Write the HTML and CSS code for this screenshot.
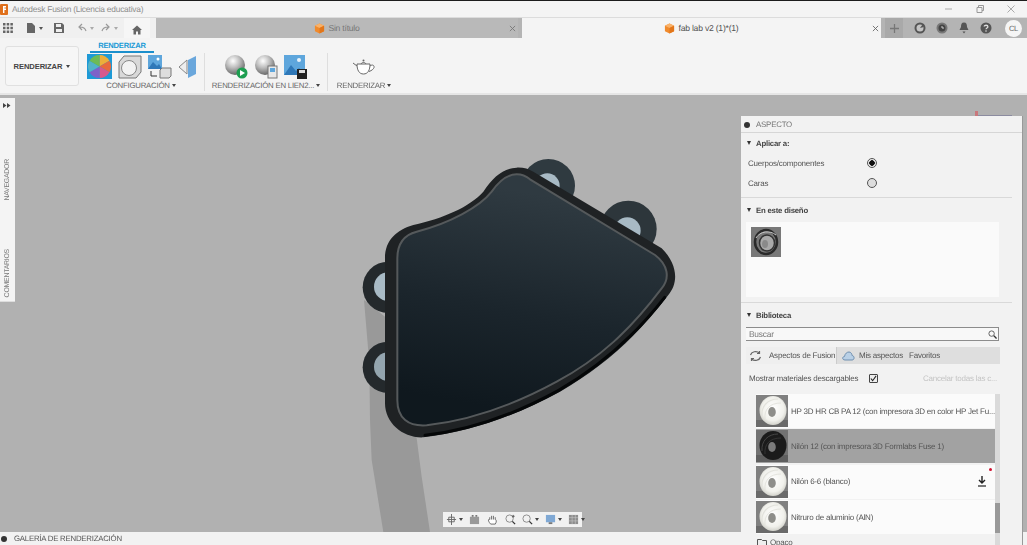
FILE: index.html
```html
<!DOCTYPE html>
<html lang="es">
<head>
<meta charset="utf-8">
<title>Autodesk Fusion</title>
<link rel="stylesheet" href="styles.css">
</head>
<body>
<svg class="defs" width="0" height="0" aria-hidden="true">
  <defs>
    <symbol id="cube" viewBox="0 0 12 12">
      <path d="M6 .5 11 3v6l-5 2.500L1 9V3z" fill="#f08a2c"/>
      <path d="M6 .5 11 3 6 5.500 1 3z" fill="#f9b26a"/>
      <path d="M6 5.500 11 3v6l-5 2.500z" fill="#e2761a"/>
    </symbol>
    <radialGradient id="tw" cx=".5" cy=".45" r=".62">
      <stop offset="0" stop-color="#fff"/><stop offset=".65" stop-color="#f1f1ec"/><stop offset="1" stop-color="#c4c4bc"/>
    </radialGradient>
    <symbol id="torus" viewBox="0 0 32 32">
      <rect width="32" height="32" fill="#808080"/>
      <rect y="25" width="32" height="7" fill="#6a6a6a"/>
      <ellipse cx="17" cy="15.500" rx="13.500" ry="14.500" fill="url(#tw)"/>
      <path d="M6 21C5 11 12 4 22 4" fill="none" stroke="#e2e2dc" stroke-width="1.200"/>
      <path d="M9 24C8 14 14 8 25 8" fill="none" stroke="#e4e4de" stroke-width="1"/>
      <ellipse cx="16" cy="17" rx="3.800" ry="5" fill="#8e8e8a"/>
    </symbol>
    <symbol id="torusdark" viewBox="0 0 32 32">
      <rect width="32" height="32" fill="#727272"/>
      <rect y="25" width="32" height="7" fill="#5f5f5f"/>
      <ellipse cx="17" cy="15.500" rx="13.500" ry="14.500" fill="#1b1b1b"/>
      <path d="M6 21C5 11 12 4 22 4" fill="none" stroke="#444" stroke-width="1"/>
      <path d="M9 24C8 14 14 8 25 8" fill="none" stroke="#3a3a3a" stroke-width=".8"/>
      <ellipse cx="16" cy="17" rx="3.800" ry="5" fill="#7b7b7b"/>
    </symbol>
    <symbol id="torusring" viewBox="0 0 30 30">
      <rect width="30" height="30" fill="#787878"/>
      <ellipse cx="15" cy="15" rx="11" ry="12" fill="none" stroke="#2a2a2a" stroke-width="2.500"/>
      <ellipse cx="16" cy="16" rx="7.500" ry="8" fill="#a9a9a9" stroke="#333" stroke-width="1.500"/>
      <path d="M5 11C9 4 19 3 25 8" fill="none" stroke="#c9c9c9" stroke-width="1"/>
      <ellipse cx="14" cy="17" rx="3" ry="4" fill="#8a8a8a"/>
    </symbol>
    <radialGradient id="ball" cx=".4" cy=".3" r=".75">
      <stop offset="0" stop-color="#fff"/><stop offset=".45" stop-color="#bdbdbd"/><stop offset="1" stop-color="#5d5d5d"/>
    </radialGradient>
    <linearGradient id="shapefill" x1=".62" y1=".1" x2=".45" y2=".95">
      <stop offset="0" stop-color="#2f3a41"/><stop offset=".55" stop-color="#1b252c"/><stop offset="1" stop-color="#0f181e"/>
    </linearGradient>
  </defs>
</svg>

<header class="titlebar">
  <svg class="applogo" viewBox="0 0 8 11"><rect width="8" height="11" rx="1" fill="#e0701c"/><path d="M3 2h3v1.400H4.400v1.200H6V6H4.400v3H3z" fill="#fff"/></svg>
  <span class="apptitle">Autodesk Fusion (Licencia educativa)</span>
  <div class="winctl">
    <svg viewBox="0 0 10 10"><path d="M1 5h7" stroke="#aaa" fill="none"/></svg>
    <svg viewBox="0 0 10 10"><path d="M2 3.500h5v5H2zM3.500 3.500V1.500h5v5H7" stroke="#999" fill="none"/></svg>
    <svg viewBox="0 0 10 10"><path d="M1.500 1.500l7 7M8.500 1.500l-7 7" stroke="#aaa" fill="none"/></svg>
  </div>
</header>

<nav class="tabrow">
  <div class="quick">
    <svg class="qi grid" viewBox="0 0 10 10"><path d="M0 0h2.500v2.500H0zM3.700 0h2.500v2.500H3.700zM7.400 0h2.500v2.500H7.400zM0 3.700h2.500v2.500H0zM3.700 3.700h2.500v2.500H3.700zM7.400 3.700h2.500v2.500H7.400zM0 7.400h2.500v2.500H0zM3.700 7.400h2.500v2.500H3.700zM7.400 7.400h2.500v2.500H7.400z" fill="#666"/></svg>
    <span class="qgroup doc"><svg class="qi" viewBox="0 0 10 10"><path d="M1 0h5l3 3v7H1z" fill="#666"/></svg><i class="caret"></i></span>
    <svg class="qi save" viewBox="0 0 10 10"><path d="M0 0h8l2 2v8H0z" fill="#666"/><path d="M2 1h5v3H2zM2 6h6v3H2z" fill="#eee"/></svg>
    <span class="qgroup undo"><svg class="qi" viewBox="0 0 10 10"><path d="M9 8C8 4.500 6 4 3 4M5 1 2 4l3 3" stroke="#999" stroke-width="1.200" fill="none"/></svg><i class="caret light"></i></span>
    <span class="qgroup redo"><svg class="qi" viewBox="0 0 10 10"><path d="M1 8c1-3.500 3-4 6-4M5 1l3 3-3 3" stroke="#999" stroke-width="1.200" fill="none"/></svg><i class="caret light"></i></span>
    <div class="hometab"><svg class="qi" viewBox="0 0 10 10"><path d="M5 .5 10 5H8.500v4.500H6V6.500H4v3H1.500V5H0z" fill="#666"/></svg></div>
  </div>
  <div class="tabs">
    <div class="tab">
      <svg class="cube"><use href="#cube"/></svg><span>Sin título</span>
      <svg class="tabx" viewBox="0 0 8 8"><path d="M1 1l6 6M7 1 1 7" stroke="#777" fill="none"/></svg>
    </div>
    <div class="tab on">
      <svg class="cube"><use href="#cube"/></svg><span>fab lab v2 (1)*(1)</span>
      <svg class="tabx" viewBox="0 0 8 8"><path d="M1 1l6 6M7 1 1 7" stroke="#666" fill="none"/></svg>
    </div>
    <div class="plus"><svg viewBox="0 0 10 10"><path d="M5 0v10M0 5h10" stroke="#777" stroke-width="1.400" fill="none"/></svg></div>
    <div class="tools">
      <svg viewBox="0 0 12 12"><circle cx="6" cy="6" r="5.500" fill="#555"/><circle cx="6" cy="6" r="3.500" fill="#c4c4c4"/><path d="M6 6 8.500 2.500 10 5z" fill="#555"/></svg>
      <svg viewBox="0 0 12 12"><circle cx="6" cy="6" r="5.500" fill="#777"/><circle cx="6" cy="6" r="3.500" fill="#444"/><path d="M6 4v2h2" stroke="#ccc" fill="none"/></svg>
      <svg viewBox="0 0 12 12"><path d="M6 .5c2.500 0 3 2 3 4.500l1.500 3h-9L3 5C3 2.500 3.500.5 6 .5zM4.500 9.500h3L6 11.500z" fill="#555"/></svg>
      <svg viewBox="0 0 12 12"><circle cx="6" cy="6" r="5.500" fill="#555"/><path d="M4.200 4.600C4.200 2.800 7.900 2.800 7.900 4.700 7.900 6 6 6 6 7.300" stroke="#ddd" stroke-width="1.300" fill="none"/><circle cx="6" cy="9" r=".8" fill="#ddd"/></svg>
      <span class="avatar">CL</span>
    </div>
  </div>
</nav>

<section class="ribbon">
  <button class="workspace">RENDERIZAR<i class="caret dark"></i></button>
  <div class="ribbonmain">
    <div class="ribtab"><span>RENDERIZAR</span></div>
    <div class="groups">
      <div class="group g1">
        <div class="icons">
          <span class="selected"><svg viewBox="0 0 22 22" width="23" height="23"><path d="M11 11 11 0A11 11 0 0 1 20.500 5.500z" fill="#ecae3a"/><path d="M11 11 20.500 5.500A11 11 0 0 1 20.500 16.500z" fill="#e8693c"/><path d="M11 11 20.500 16.500A11 11 0 0 1 11 22z" fill="#d65a8e"/><path d="M11 11 11 22A11 11 0 0 1 1.500 16.500z" fill="#7d62c8"/><path d="M11 11 1.500 16.500A11 11 0 0 1 1.500 5.500z" fill="#52b3c8"/><path d="M11 11 1.500 5.500A11 11 0 0 1 11 0z" fill="#6dbb55"/></svg></span>
          <svg viewBox="0 0 24 24" width="24" height="24"><path d="M1 7 6 1h17v16l-5 6H1z" fill="#d9d9d9" stroke="#777"/><circle cx="11" cy="13" r="7.500" fill="#f2f2f2" stroke="#888"/></svg>
          <svg viewBox="0 0 24 24" width="24" height="24"><rect width="14" height="14" fill="#5ea6dc"/><path d="M0 14 5 7l4 4 2-2 3 5z" fill="#2f78b8"/><circle cx="10" cy="4" r="1.500" fill="#fff"/><path d="M12 15l2-2h9v8l-2 2h-9z" fill="#ddd" stroke="#777"/><path d="M3 16v5h6" stroke="#333" fill="none"/></svg>
          <svg viewBox="0 0 20 24" width="20" height="24"><path d="M1 12 9 5v14z" fill="#eee" stroke="#888"/><path d="M10 5 18 1v18l-8 4z" fill="#6aa7dc"/></svg>
        </div>
        <div class="glabel">CONFIGURACIÓN<i class="caret dark"></i></div>
      </div>
      <div class="group g2">
        <div class="icons">
          <svg viewBox="0 0 24 24" width="24" height="24"><circle cx="11" cy="10" r="10" fill="url(#ball)"/><circle cx="18" cy="18" r="5.500" fill="#1d9e50"/><path d="M16 15l5 3-5 3z" fill="#fff"/></svg>
          <svg viewBox="0 0 24 24" width="24" height="24"><circle cx="11" cy="10" r="10" fill="url(#ball)"/><rect x="14" y="11" width="9" height="12" fill="#e8e8e8" stroke="#777"/><rect x="16" y="13" width="5" height="4" fill="#5ea6dc"/></svg>
          <svg viewBox="0 0 24 24" width="24" height="24"><rect width="21" height="20" fill="#5ea6dc"/><path d="M0 20 7 10l5 6 3-3 6 7z" fill="#2f78b8"/><circle cx="15" cy="5" r="2" fill="#e8f3fb"/><rect x="13" y="14" width="10" height="10" fill="#222"/><rect x="15" y="15" width="6" height="3" fill="#ddd"/></svg>
        </div>
        <div class="glabel">RENDERIZACIÓN EN LIEN2...<i class="caret dark"></i></div>
      </div>
      <div class="group g3">
        <div class="icons">
          <svg viewBox="0 0 24 18" width="24" height="18"><path d="M5 6h13c0 6-2 10-6.500 10S5 12 5 6zM18 8c2.500-2 4.500-.5 4 1.500-.5 1.500-2 3-5 4M5 8 1 5M9 6c1-2 4-2 5 0" fill="#fff" stroke="#666"/><circle cx="11.500" cy="2.500" r="1" fill="#666"/></svg>
        </div>
        <div class="glabel">RENDERIZAR<i class="caret dark"></i></div>
      </div>
    </div>
  </div>
</section>

<main class="viewport">
  <svg class="model" viewBox="0 0 1050 1146" aria-hidden="true">
    <path d="M72 450 88 640 90 810 95 930 130 1146H270L245 980 230 865 135 500z" fill="#999"/>
    <circle cx="625" cy="107" r="80" fill="#2f3a40"/><circle cx="622" cy="107" r="37" fill="#a8bac5"/>
    <circle cx="865" cy="237" r="85" fill="#2d363b"/><circle cx="862" cy="242" r="40" fill="#a8bac5"/>
    <circle cx="145" cy="412" r="77" fill="#24292c"/><circle cx="145" cy="410" r="43" fill="#a8bac5"/>
    <circle cx="145" cy="652" r="77" fill="#24292c"/><circle cx="145" cy="650" r="43" fill="#94a5af"/>
    <path d="M530 53C490 55 460 80 430 125 390 170 310 205 220 225 170 240 135 270 135 325V760C135 820 190 865 250 862 400 845 540 790 660 725 790 650 890 560 985 435 1015 400 1015 345 965 295L580 65C565 57 550 52 530 53z" fill="#1f2224"/>
    <path d="M530 73C500 73 478 92 455 125 420 170 330 220 230 245 190 255 172 280 172 325V750C172 805 205 830 260 826 400 810 540 755 650 695 780 625 870 540 965 415 990 385 985 345 945 315L570 88C558 78 545 73 530 73z" fill="url(#shapefill)" stroke="#55595b" stroke-width="6"/>
    <path d="M255 856C400 840 538 786 656 721 786 646 884 558 974 442" fill="none" stroke="#050708" stroke-width="9" stroke-linecap="round"/>
  </svg>

  <aside class="sidetabs">
    <svg class="expand" viewBox="0 0 8 5"><path d="M0 0l3.500 2.500L0 5zM4 0l3.500 2.500L4 5z" fill="#444"/></svg>
    <span class="vtext nav">NAVEGADOR</span>
    <span class="vtext com">COMENTARIOS</span>
  </aside>

  <div class="axis"><span class="axisx"></span><span class="axisline"></span></div>

  <aside class="panel">
    <div class="phead"><i class="minus"></i>ASPECTO</div>
    <div class="sec apply">
      <h3><i class="tri"></i>Aplicar a:</h3>
      <label class="radio"><span>Cuerpos/componentes</span><i class="rad on"></i></label>
      <label class="radio"><span>Caras</span><i class="rad"></i></label>
    </div>
    <div class="sec design">
      <h3><i class="tri"></i>En este diseño</h3>
      <div class="designbox"><svg class="dthumb"><use href="#torusring"/></svg></div>
    </div>
    <div class="sec lib">
      <h3><i class="tri"></i>Biblioteca</h3>
      <div class="search"><span>Buscar</span><svg viewBox="0 0 10 10"><circle cx="4" cy="4" r="3" fill="none" stroke="#555"/><path d="M6.500 6.500 9.500 9.500" stroke="#333" stroke-width="1.500"/></svg></div>
      <div class="libtabs">
        <div class="libtab on">
          <svg viewBox="0 0 12 12"><path d="M1 5C2 1.500 7 .5 10 3M10 1v2.500H7.500M11 7C10 10.500 5 11.500 2 9M2 11V8.500h2.500" fill="none" stroke="#666" stroke-width="1.200"/></svg>
          <span>Aspectos de Fusion</span>
        </div>
        <div class="libtab">
          <svg viewBox="0 0 13 9"><path d="M3 8.500C0 8.500 0 5 2.500 5 3 2 5 .5 7 .5 9 .5 10 2.500 10 4c2.500 0 3 4.500 0 4.500z" fill="#b9d0e6" stroke="#6f8fb0"/></svg>
          <span>Mis aspectos</span>
        </div>
        <div class="libtab"><span>Favoritos</span></div>
      </div>
      <div class="downloadable">
        <span>Mostrar materiales descargables</span>
        <i class="check"><svg viewBox="0 0 8 8"><path d="M1 4l2 2.500L7 1" fill="none" stroke="#222" stroke-width="1.200"/></svg></i>
        <span class="cancel">Cancelar todas las c...</span>
      </div>
      <div class="listwrap">
        <ul class="list">
          <li class="item"><svg class="thumb"><use href="#torus"/></svg><span>HP 3D HR CB PA 12 (con impresora 3D en color HP Jet Fu...</span></li>
          <li class="item sel"><svg class="thumb"><use href="#torusdark"/></svg><span>Nilón 12 (con impresora 3D Formlabs Fuse 1)</span></li>
          <li class="item"><svg class="thumb"><use href="#torus"/></svg><span>Nilón 6-6 (blanco)</span><i class="dot"></i><svg class="dl" viewBox="0 0 10 11"><path d="M5 0v6M2 4l3 3 3-3" fill="none" stroke="#222" stroke-width="1.400"/><path d="M1 10h8" stroke="#222" stroke-width="1.200"/></svg></li>
          <li class="item"><svg class="thumb"><use href="#torus"/></svg><span>Nitruro de aluminio (AlN)</span></li>
          <li class="folder"><svg viewBox="0 0 10 7"><path d="M.5.500h4l1 1h4v5h-9z" fill="#eee" stroke="#555"/></svg><span>Opaco</span></li>
        </ul>
        <div class="scroll"><div class="thumbbar"></div></div>
      </div>
    </div>
  </aside>

  <div class="navbar">
    <svg class="n1" viewBox="0 0 12 12"><path d="M6 0v12M1 6h10M3 3.500h6v5H3z" fill="none" stroke="#666"/></svg><i class="caret dark"></i>
    <svg class="n2" viewBox="0 0 12 12"><path d="M1 3h10v8H1z" fill="#999"/><path d="M3 1h2v2H3zM7 1h2v2H7z" fill="#777"/></svg>
    <svg class="n3" viewBox="0 0 12 12"><path d="M3 6V3.500M5 6V2M7 6V2M9 6V3.500M3 6C1 5 1 8 4 11H9C11 8 10 6 9 6" fill="#fff" stroke="#666"/></svg>
    <svg class="n4" viewBox="0 0 12 12"><circle cx="5" cy="5" r="4" fill="none" stroke="#888"/><path d="M8 8l3 3" stroke="#333" stroke-width="1.400"/><path d="M9 1v3M7.500 2.500h3" stroke="#555"/></svg>
    <span class="ngroup"><svg viewBox="0 0 12 12"><circle cx="5" cy="5" r="4" fill="none" stroke="#888"/><path d="M8 8l3 3" stroke="#333" stroke-width="1.400"/></svg><i class="caret dark"></i></span>
    <span class="ngroup"><svg viewBox="0 0 12 12"><rect x="1" y="1" width="10" height="8" fill="#7fa8d4"/><rect x="4" y="9" width="4" height="2" fill="#777"/></svg><i class="caret dark"></i></span>
    <span class="ngroup"><svg viewBox="0 0 12 12"><path d="M1 1h10v10H1z" fill="#8d8d8d"/><path d="M1 4h10M1 7.500h10M4.500 1v10M8 1v10" stroke="#ccc" stroke-width=".6"/></svg><i class="caret dark"></i></span>
  </div>
</main>

<footer class="gallery"><i class="minus"></i>GALERÍA DE RENDERIZACIÓN</footer>
</body>
</html>
```

FILE: styles.css
```css
* { box-sizing: border-box; }
html, body { margin: 0; height: 100%; }
body {
  width: 1027px; height: 545px; overflow: hidden;
  display: flex; flex-direction: column;
  font-family: "Liberation Sans", Arial, sans-serif;
  font-size: 8px; letter-spacing: -.22px; color: #555; background: #f2f2f2;
  text-rendering: geometricPrecision;
  filter: blur(.3px);
}
.defs { position: absolute; }
i { display: block; font-style: normal; }
ul { list-style: none; margin: 0; padding: 0; }

.caret { width: 0; height: 0; border: 2.5px solid transparent; border-top: 3px solid #555; border-bottom: 0; }
.caret.light { border-top-color: #aaa; }
.caret.dark { border-top-color: #444; }

.titlebar {
  height: 18px; flex: none; display: flex; align-items: center;
  background: #f4f4f4; border-top: 1px solid #1c1c1c; border-bottom: 1px solid #dcdcdc;
  padding-right: 11px;
}
.applogo { width: 8px; height: 11px; margin-right: 4px; }
.apptitle { color: #8e8e8e; font-size: 8.4px; }
.winctl { margin-left: auto; display: flex; gap: 21px; }
.winctl svg { width: 10px; height: 10px; }

.tabrow { height: 20px; flex: none; display: flex; background: #f0f0f0; }
.quick { width: 156px; flex: none; display: flex; align-items: center; padding-left: 3px; }
.qi { width: 10px; height: 10px; display: block; }
.qgroup { display: flex; align-items: center; gap: 3px; }
.doc { margin-left: 13px; }
.save { margin-left: 11px; }
.undo { margin-left: 13px; }
.redo { margin-left: 7px; }
.hometab {
  width: 26px; align-self: stretch; margin-left: 6px; background: #f6f6f6;
  display: flex; align-items: center; justify-content: center; padding-top: 3px;
}
.tabs { flex: 1; display: flex; background: #b4b4b4; }
.tab {
  position: relative; width: 362px; display: flex; align-items: center; justify-content: center; gap: 3px;
  background: #b9b9b9; color: #777; font-size: 8.6px; padding-left: 0;
}
.tab.on { width: 359px; margin-left: 4px; background: #f4f4f4; color: #555; }
.cube { width: 11px; height: 11px; }
.tabx { position: absolute; right: 2px; top: 7px; width: 7px; height: 7px; }
.plus { width: 18px; margin-left: 4px; background: #a9a9a9; display: flex; align-items: center; justify-content: center; }
.plus svg { width: 9px; height: 9px; }
.tools { flex: 1; display: flex; align-items: center; padding-left: 11px; gap: 10px; }
.tools svg { width: 12px; height: 12px; }
.avatar {
  width: 17px; height: 17px; margin-left: 3px; border-radius: 50%; background: #f5f5f5;
  color: #666; font-size: 7.5px; display: flex; align-items: center; justify-content: center;
}

.ribbon {
  height: 57px; flex: none; display: flex; align-items: flex-start;
  background: #f4f4f4; border-bottom: 2px solid #e6e6e6; padding: 7px 0 0 5px;
}
.workspace {
  width: 74px; height: 40px; flex: none; margin-top: 1px; padding: 0;
  display: flex; align-items: center; justify-content: center; gap: 4px;
  background: #f6f6f6; border: 1px solid #e0e0e0; border-radius: 3px;
  font: bold 7.6px "Liberation Sans", Arial, sans-serif; letter-spacing: -.1px; color: #444;
}
.ribbonmain { margin-left: 8px; margin-top: -3px; }
.ribtab { width: 64px; margin-left: 3px; height: 11px; border-bottom: 2px solid #1b8fcc; color: #1a9ad6; font-weight: bold; font-size: 7.6px; text-align: center; line-height: 8px; white-space: nowrap; }
.groups { display: flex; }
.group { display: flex; flex-direction: column; align-items: center; border-right: 1px solid #dedede; height: 38px; }
.group:last-child { border-right: 0; }
.g1 { width: 118px; padding-right: 9px; }
.g1 .icons { align-self: flex-start; }
.g2 { width: 123px; }
.g3 { width: 72px; }
.icons { height: 27px; display: flex; align-items: center; gap: 6px; }
.icons svg { display: block; flex: none; }
.selected { width: 25px; height: 25px; background: #1e9ad6; display: flex; align-items: center; justify-content: center; flex: none; }
.glabel { display: flex; align-items: center; gap: 2px; color: #666; font-size: 7.8px; white-space: nowrap; margin-top: 1px; }

.viewport { flex: 1; min-height: 0; position: relative; z-index: 1; background: #b1b1b1; }
.model { position: absolute; left: 340px; top: 55px; width: 350px; height: 382px; }

.sidetabs {
  position: absolute; left: 0; top: 3px; width: 15px; height: 204px;
  background: #f4f4f4; border-bottom: 1px solid #ddd;
}
.expand { position: absolute; left: 3px; top: 5px; width: 8px; height: 5px; }
.vtext { position: absolute; left: 3.5px; writing-mode: vertical-rl; transform: rotate(180deg); color: #777; font-size: 6.9px; white-space: nowrap; }
.nav { top: 61px; }
.com { top: 151px; }

.axis { position: absolute; left: 975px; top: 16px; width: 40px; height: 6px; }
.axisx { position: absolute; left: 0; top: 0; width: 3px; height: 5px; background: #c9787c; }
.axisline { position: absolute; left: 3px; top: 4px; width: 34px; height: 1px; background: #8c8ca0; }

.panel {
  position: absolute; left: 741px; top: 21px; width: 282px; height: 429px;
  background: #f2f2f2; overflow: hidden; border-right: 1px solid #999;
}
.phead {
  height: 17px; display: flex; align-items: center; gap: 6px; padding-left: 3px; padding-top: 1px;
  border-bottom: 1px solid #d6d6d6; color: #777; font-size: 7.9px;
}
.minus { width: 6px; height: 6px; border-radius: 50%; background: #333; }
.sec { padding-left: 5px; width: 271px; border-bottom: 1px solid #d9d9d9; }
.sec h3 { margin: 0; height: 13px; display: flex; align-items: center; gap: 5px; font-size: 7.8px; font-weight: bold; color: #444; padding-left: 1px; }
.tri { width: 0; height: 0; border: 2.5px solid transparent; border-top: 4px solid #333; border-bottom: 0; }
.apply { height: 65px; padding-top: 3.5px; }
.apply h3 { margin-bottom: 3.5px; }
.radio { display: flex; align-items: center; height: 20px; padding-left: 2px; color: #555; }
.radio span { width: 119px; }
.rad { width: 10px; height: 10px; border-radius: 50%; border: 1px solid #555; background: #ddd; }
.rad.on { background: radial-gradient(circle, #111 0 2.5px, #e8e8e8 3px); }
.design { height: 105px; padding-top: 5.5px; }
.designbox { width: 253px; height: 75px; margin-top: 5.5px; background: #fafafa; padding: 5px; }
.dthumb { display: block; width: 30px; height: 30px; }
.lib { border: 0; padding-top: 5.5px; }
.search {
  width: 253px; height: 14px; margin-top: 5.5px; padding: 0 1px 0 3px;
  display: flex; align-items: center; justify-content: space-between;
  background: #f8f8f8; border: 1px solid #8c8c8c; border-width: 1px 1px 1px 0; color: #777; font-size: 8.4px;
}
.search svg { width: 9px; height: 9px; }
.libtabs { width: 254px; height: 17px; margin-top: 6px; display: flex; background: #dedede; color: #555; white-space: nowrap; }
.libtab { display: flex; align-items: center; gap: 5px; padding: 0 7px 0 3px; }
.libtab.on { width: 91px; flex: none; background: #efefef; border-right: 1px solid #ccc; gap: 7px; }
.libtab:nth-child(2) { width: 69px; flex: none; padding-left: 5px; gap: 4px; }
.libtab svg { width: 13px; height: 12px; flex: none; }
.downloadable { height: 28px; padding-left: 3px; display: flex; align-items: center; }
.downloadable > span:first-child { width: 120px; white-space: nowrap; }
.check { width: 9px; height: 9px; border: 1px solid #444; border-radius: 1px; background: #eee; padding: 0; flex: none; }
.check svg { display: block; width: 7px; height: 7px; }
.cancel { margin-left: 45px; color: #c4c4c4; white-space: nowrap; }
.listwrap { display: flex; align-items: flex-start; margin: 2px 0 0 10px; width: 244px; height: 151px; }
.list { width: 239px; height: 151px; overflow: hidden; }
.item { position: relative; height: 34px; margin-bottom: 1.4px; display: flex; align-items: center; gap: 3px; background: #fbfbfb; color: #555; white-space: nowrap; }
.item.sel { background: #a2a2a2; color: #555; }
.thumb { width: 32px; height: 34px; flex: none; }
.dot { position: absolute; right: 3px; top: 3px; width: 3px; height: 3px; border-radius: 50%; background: #d01030; }
.dl { position: absolute; right: 8px; top: 11px; width: 10px; height: 11px; }
.folder { height: 13px; display: flex; align-items: center; gap: 3px; padding-left: 1px; }
.folder svg { width: 10px; height: 7px; }
.scroll { width: 5px; height: 151px; background: #dadada; display: flex; flex-direction: column; }
.thumbbar { height: 30px; margin-top: 109px; background: #999; }

.navbar {
  position: absolute; left: 443px; top: 417px; width: 139px; height: 15px;
  display: flex; align-items: center; padding-left: 3px; background: #f1f1f1;
}
.navbar svg { width: 11px; height: 11px; display: block; flex: none; }
.navbar .caret { margin-left: 2px; }
.n2 { margin-left: 6px; }
.n3 { margin-left: 7px; }
.n4 { margin-left: 7px; }
.ngroup { display: flex; align-items: center; margin-left: 6px; }

.gallery {
  height: 13px; flex: none; display: flex; align-items: center; gap: 7px; padding-left: 1px;
  background: #f2f2f2; color: #555; font-size: 7.8px;
}
```
